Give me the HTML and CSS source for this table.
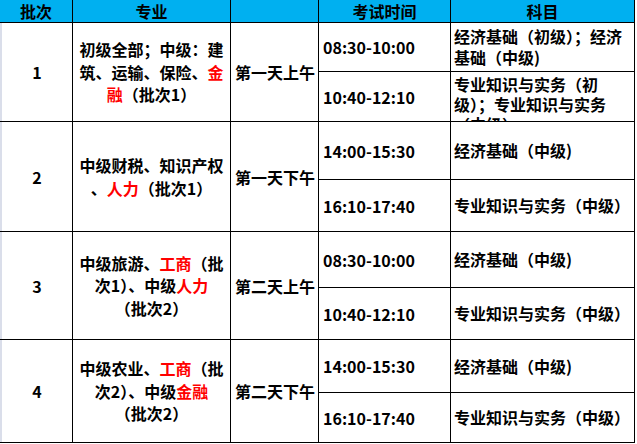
FILE: index.html
```html
<!DOCTYPE html>
<html lang="zh">
<head>
<meta charset="utf-8">
<title>考试时间安排</title>
<link rel="stylesheet" href="styles.css">
</head>
<body>
<div class="sheet">
  <div class="hd">批次</div>
  <div class="hd">专业</div>
  <div class="hd"></div>
  <div class="hd">考试时间</div>
  <div class="hd">科目</div>

  <div class="c num r1">1</div>
  <div class="c major r1"><div class="in">初级全部<span class="pc">；</span>中级<span class="pc">：</span>建<br>筑、运输、保险、<span class="red">金</span><br><span class="red">融</span>（批次1）</div></div>
  <div class="c day r1">第一天上午</div>
  <div class="c time">08:30-10:00</div>
  <div class="c subj"><div class="in">经济基础（初级）<span class="pc">；</span>经济<br>基础（中级)</div></div>
  <div class="c time">10:40-12:10</div>
  <div class="c subj top"><div class="in">专业知识与实务（初<br>级）<span class="pc">；</span>专业知识与实务<br>（中级）</div></div>

  <div class="c num r2">2</div>
  <div class="c major r2"><div class="in">中级财税、知识产权<br>、<span class="red">人力</span>（批次1）</div></div>
  <div class="c day r2">第一天下午</div>
  <div class="c time">14:00-15:30</div>
  <div class="c subj">经济基础（中级)</div>
  <div class="c time">16:10-17:40</div>
  <div class="c subj">专业知识与实务（中级）</div>

  <div class="c num r3">3</div>
  <div class="c major r3"><div class="in">中级旅游、<span class="red">工商</span>（批<br>次1）、中级<span class="red">人力</span><br>（批次2）</div></div>
  <div class="c day r3">第二天上午</div>
  <div class="c time">08:30-10:00</div>
  <div class="c subj">经济基础（中级)</div>
  <div class="c time">10:40-12:10</div>
  <div class="c subj">专业知识与实务（中级）</div>

  <div class="c num r4">4</div>
  <div class="c major r4"><div class="in">中级农业、<span class="red">工商</span>（批<br>次2）、中级<span class="red">金融</span><br>（批次2）</div></div>
  <div class="c day r4">第二天下午</div>
  <div class="c time">14:00-15:30</div>
  <div class="c subj">经济基础（中级)</div>
  <div class="c time">16:10-17:40</div>
  <div class="c subj">专业知识与实务（中级）</div>
</div>
</body>
</html>
```
FILE: styles.css
```css
html, body {
  margin: 0;
  padding: 0;
  background: #ffffff;
}
body {
  width: 637px;
  height: 444px;
  overflow: hidden;
  font-family: "Noto Sans CJK SC", "Noto Sans", sans-serif;
  font-size: 16px;
  font-weight: 700;
  color: #000;
}
.sheet {
  display: grid;
  grid-template-columns: 72px 157px 87px 131px 183px;
  grid-template-rows: 22px 48px 49px 57px 51px 55px 51px 52px 49px;
  column-gap: 1px;
  row-gap: 1px;
  width: 634px;
  background: #000;
  border-right: 1px solid #000;
  border-bottom: 1px solid #000;
}
.hd {
  background: #00b0f0;
  display: flex;
  align-items: center;
  justify-content: center;
  line-height: 22px;
  white-space: nowrap;
}
.c {
  background: #fff;
  display: flex;
  align-items: center;
  white-space: nowrap;
  overflow: hidden;
}
.num {
  justify-content: center;
  border-left: 2px solid #dadeea;
  box-sizing: border-box;
}
.major {
  justify-content: center;
  text-align: center;
  line-height: 22.5px;
}
.day {
  padding-left: 4px;
}
.time {
  padding-left: 4px;
}
.subj {
  padding-left: 3px;
  line-height: 21px;
}
.subj.top {
  align-items: flex-start;
  padding-top: 2px;
  line-height: 20px;
}
.pc {
  font-family: "Noto Sans CJK JP", "Noto Sans CJK SC", sans-serif;
}
.r1 { grid-row: 2 / span 2; }
.r2 { grid-row: 4 / span 2; }
.r3 { grid-row: 6 / span 2; }
.r4 { grid-row: 8 / span 2; }
.red { color: #ff0000; }
```
